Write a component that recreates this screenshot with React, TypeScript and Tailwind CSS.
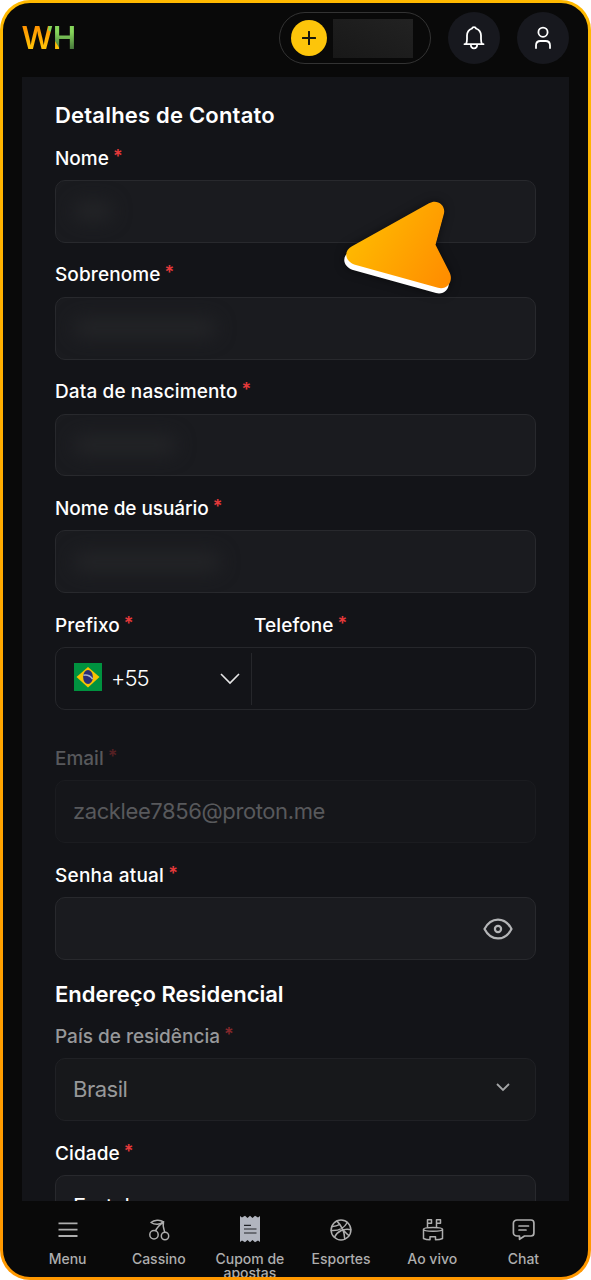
import React from "react";

interface FieldProps {
  label: string;
  labelClass?: string;
  boxClass?: string;
  className?: string;
  children?: React.ReactNode;
}

function Star() {
  return (
    <span className="relative -top-0.5 ml-[4px] text-[18px] leading-none font-semibold tracking-normal text-[#e5393a]">
      *
    </span>
  );
}

function Field({
  label,
  labelClass = "",
  boxClass = "border-[#28292d] bg-[#1a1b1f]",
  className = "",
  children,
}: FieldProps) {
  return (
    <div className={`mb-[19.7px] ${className}`}>
      <label className={`block h-6 pt-px text-[19px] leading-6 font-medium ${labelClass}`}>
        {label}
        <Star />
      </label>
      <div className={`mt-[10.3px] flex h-[62.8px] items-center rounded-[10px] border px-[17px] ${boxClass}`}>
        {children}
      </div>
    </div>
  );
}

// Hidden value inside a private field
function Smudge({ className }: { className: string }) {
  return <div className={`h-5 rounded-full bg-[#232427] blur-[9px] ${className}`} />;
}

function Logo() {
  return (
    <svg width="56" height="30" viewBox="0 0 56 30" className="block">
      <defs>
        <clipPath id="letters">
          <text x="-0.5" y="26" fontFamily="Inter" fontWeight="600" fontSize="31" textLength="31.5" lengthAdjust="spacingAndGlyphs">
            W
          </text>
          <text x="30.8" y="26" fontFamily="Inter" fontWeight="600" fontSize="31" textLength="23.5" lengthAdjust="spacingAndGlyphs">
            H
          </text>
        </clipPath>
        <linearGradient id="orange" x1="0" y1="0" x2="0" y2="1">
          <stop offset="0.1" stopColor="#ff9200" />
          <stop offset="0.8" stopColor="#ffc107" />
        </linearGradient>
        <linearGradient id="green" x1="0" y1="0" x2="0" y2="1">
          <stop offset="0.3" stopColor="#86d65b" />
          <stop offset="0.9" stopColor="#44733a" />
        </linearGradient>
      </defs>
      <g clipPath="url(#letters)">
        <rect width="56" height="30" fill="url(#green)" />
        <path d="M0 0H27L26 7L30 10L33 18L38.5 27V30H0Z" fill="url(#orange)" />
      </g>
    </svg>
  );
}

function BrazilFlag() {
  return (
    <svg width="28" height="28" viewBox="0 0 28 28" className="mb-[3px] block">
      <rect width="28" height="28" fill="#00923f" />
      <path d="M14 4L25.5 14L14 24.5L2.5 14Z" fill="#f8c300" />
      <ellipse cx="14" cy="14" rx="4.9" ry="7" fill="#2b2d77" />
      <path d="M9.4 12.2C13 11.5 16.5 13 18.6 16" stroke="#a9b4cc" strokeWidth="1.6" fill="none" />
    </svg>
  );
}

function Pointer() {
  const shape =
    "M10 48L87 5C95 0 105 7 101.5 17L93.5 46.5L107.5 74C112 83 105 92 96 89.5L13 66.5C3 63 1 53 10 48Z";
  return (
    <svg
      width="120"
      height="110"
      viewBox="0 0 120 110"
      className="pointer-events-none absolute top-[195px] left-[339px] drop-shadow-[0_0_5px_rgba(0,0,0,0.5)]"
    >
      <defs>
        <linearGradient id="pointerFill" x1="0" y1="0.3" x2="1" y2="0.8">
          <stop offset="0" stopColor="#ffbd00" />
          <stop offset="1" stopColor="#ff8e00" />
        </linearGradient>
      </defs>
      <path d={shape} transform="translate(1 8.5)" fill="#fff" />
      <path d={shape} transform="translate(3 3.3)" fill="url(#pointerFill)" />
    </svg>
  );
}

const iconProps = {
  width: 24,
  height: 24,
  viewBox: "0 0 24 24",
  fill: "none",
  stroke: "currentColor",
  strokeWidth: 1.5,
  strokeLinecap: "round" as const,
  strokeLinejoin: "round" as const,
};

const navItems = [
  {
    label: "Menu",
    icon: (
      <svg {...iconProps} strokeLinecap="butt" strokeWidth={1.8}>
        <path d="M2.5 5.3H21.5M2.5 11.7H21.5M2.5 18H21.5" />
      </svg>
    ),
  },
  {
    label: "Cassino",
    icon: (
      <svg {...iconProps}>
        <circle cx="7" cy="16.7" r="4.2" />
        <circle cx="18" cy="18" r="3.7" />
        <path d="M16.5 3.8C13 1.2 7 1.8 4 4.5C8 7.2 13.5 6.8 16.5 3.8Z" />
        <path d="M16.5 3.8C12.5 7 9.5 9.5 8.8 12.5M16.5 3.8C15.4 8 16.8 11 17.8 14.3" />
      </svg>
    ),
  },
  {
    label: "Cupom de apostas",
    icon: (
      <svg width="22" height="28" viewBox="0 0 22 28" className="-mt-[2.5px] -mb-[1.5px]">
        <path
          d="M1 1L3 2.5L6 0.8L8.5 3L11 0.8L13.5 3L16 0.8L19 2.5L21 1V27L19 25.5L16 27.2L13.5 25L11 27.2L8.5 25L6 27.2L3 25.5L1 27Z"
          fill="#b1b5bf"
        />
        <path d="M5 10.3H12M5 14H17.5M5 18H17.5" stroke="#222429" strokeWidth="1.2" />
      </svg>
    ),
  },
  {
    label: "Esportes",
    icon: (
      <svg {...iconProps}>
        <circle cx="12" cy="12" r="9.9" />
        <path d="M8 3.1C12 7 15.5 14 15.7 21M2.2 12.5C9 13 15 10.5 18.3 4.5M5.5 19.3C8 13.5 14.5 10.3 21.7 11.7M2.8 8.4C5 8.5 8 8 10.3 6.7M13.8 11.5C16 14 18.5 16.8 20 17.4" />
      </svg>
    ),
  },
  {
    label: "Ao vivo",
    icon: (
      <svg {...iconProps}>
        <path d="M7.5 9.3V1.8H11.5V5.3H7.5M16.5 9.3V1.8H20.5V5.3H16.5" />
        <path d="M3.5 11.2C3.5 8.8 22.5 8.8 22.5 11.2C22.5 13.9 3.5 13.9 3.5 11.2ZM3.5 11.2V20.5C5.4 21.5 7.7 21.8 10 21.8V18.8H15.5V21.8C18 21.8 20.6 21.5 22.5 20.5V11.2" />
      </svg>
    ),
  },
  {
    label: "Chat",
    icon: (
      <svg {...iconProps} strokeWidth={1.7}>
        <path d="M6 2H20C21.7 2 22.9 3.2 22.9 5V15C22.9 16.8 21.7 18 20 18H13.5L8.5 21.3V18H6C4.2 18 2.4 16.8 2.4 15V5C2.4 3.2 4.2 2 6 2Z" />
        <path d="M8 8H17.5M8 12H15" />
      </svg>
    ),
  },
];

export default function App() {
  return (
    <div className="relative h-[1280px] w-[591px] overflow-hidden bg-white font-['Inter',sans-serif] text-white">
      <div className="h-full rounded-[30px] bg-linear-to-b from-[#ffb900] to-[#ff9800] p-[3px]">
        <div className="flex h-full flex-col overflow-hidden rounded-[27px] bg-[#090909] px-[19px]">
          <header className="flex h-[74px] shrink-0 items-center justify-between pb-[4px]">
            <Logo />
            <div className="flex items-center gap-[17px]">
              <div className="flex h-[52px] w-[152px] items-center rounded-full border border-[#333333] pl-[11px]">
                <div className="flex size-9 items-center justify-center rounded-full bg-[#fdc50a]">
                  <svg width="14" height="14" viewBox="0 0 14 14">
                    <path d="M7 0.8V13.2M0.8 7H13.2" stroke="#18160c" strokeWidth="2" strokeLinecap="round" />
                  </svg>
                </div>
                <div className="ml-[6px] h-[39px] w-20 bg-linear-to-tr from-[#181818] to-[#222222]" />
              </div>
              <div className="flex size-[52px] items-center justify-center rounded-full bg-[#17181e]">
                <svg width="24" height="26" viewBox="0 0 24 26" fill="none" stroke="#fff" strokeWidth="1.8">
                  <path
                    d="M2.5 19.2H21.5M4 19C4.8 17.5 5 16 5 14V10.5C5 6.5 7.5 4.5 10 3.5C10.3 1.7 13.7 1.7 14 3.5C16.5 4.5 19 6.5 19 10.5V14C19 16 19.2 17.5 20 19M8.8 19.5C9 24.6 15 24.6 15.2 19.5"
                    strokeLinecap="round"
                    strokeLinejoin="round"
                  />
                </svg>
              </div>
              <div className="flex size-[52px] items-center justify-center rounded-full bg-[#17181e]">
                <svg width="20" height="24" viewBox="0 0 20 24" fill="none" stroke="#fff" strokeWidth="1.8">
                  <circle cx="10" cy="6.2" r="4.6" />
                  <path d="M3 22.8V19.5C3 16.5 4.5 15 7.5 15H12.5C15.5 15 17 16.5 17 19.5V22.8" />
                </svg>
              </div>
            </div>
          </header>

          <main className="h-[1123.5px] shrink-0 overflow-hidden bg-[#131418] px-[33px] pt-[23.5px]">
            <h2 className="mb-[17.2px] h-7 text-[22px] leading-7 font-semibold tracking-[0.2px]">Detalhes de Contato</h2>
            <Field label="Nome">
              <Smudge className="w-10" />
            </Field>
            <Field label="Sobrenome" labelClass="tracking-[0.1px]">
              <Smudge className="w-36" />
            </Field>
            <Field label="Data de nascimento" labelClass="tracking-[0.12px]">
              <Smudge className="w-26" />
            </Field>
            <Field label="Nome de usuário" labelClass="tracking-[-0.06px]">
              <Smudge className="w-37" />
            </Field>

            <div className="mb-[36.2px]">
              <div className="flex h-6 pt-px text-[19px] leading-6 font-medium tracking-[0.1px]">
                <label className="w-[199px]">
                  Prefixo
                  <Star />
                </label>
                <label>
                  Telefone
                  <Star />
                </label>
              </div>
              <div className="mt-[10.3px] flex h-[62.8px] items-center rounded-[10px] border border-[#26272b] pl-[18px]">
                <BrazilFlag />
                <span className="ml-[9px] text-[22px] font-light tracking-[-0.9px]">+55</span>
                <svg width="20" height="12" viewBox="0 0 20 12" className="mr-[11px] ml-auto">
                  <path d="M1 1L10 10L19 1" fill="none" stroke="#e6e6e6" strokeWidth="1.6" />
                </svg>
                <div className="h-[52px] w-[284px] border-l border-[#26272b]" />
              </div>
            </div>

            <Field
              label="Email"
              className="text-[#58595c]"
              boxClass="border-[#1b1c20] bg-[#15161a]"
              labelClass="[&>span]:text-[#552023]"
            >
              <span className="text-[22px] tracking-[-0.4px]">zacklee7856@proton.me</span>
            </Field>
            <Field label="Senha atual" labelClass="tracking-[0.25px]">
              <svg width="30" height="22" viewBox="0 0 30 22" fill="none" stroke="#b4b5b7" strokeWidth="2.2" className="mr-[5.5px] ml-auto">
                <path d="M1.5 11C8 -1.6 22 -1.6 28.5 11C22 23.6 8 23.6 1.5 11Z" strokeLinejoin="round" />
                <circle cx="15" cy="11" r="3.1" />
              </svg>
            </Field>

            <h2 className="mb-[16.2px] h-7 text-[22px] leading-7 font-semibold">Endereço Residencial</h2>
            <Field
              label="País de residência"
              className="text-[#97989a]"
              boxClass="border-[#202125] bg-[#17181b]"
              labelClass="[&>span]:text-[#85282b]"
            >
              <span className="text-[22px] tracking-[-0.5px]">Brasil</span>
              <svg width="14" height="9" viewBox="0 0 14 9" className="mr-[8px] mb-[5px] ml-auto">
                <path d="M1 1L7 7L13 1" fill="none" stroke="#a4a5a7" strokeWidth="1.8" />
              </svg>
            </Field>
            <Field label="Cidade" labelClass="tracking-[0.1px]">
              <span className="text-[22px] tracking-[-0.4px]">Fortaleza</span>
            </Field>
          </main>

          <nav className="grid shrink-0 grid-cols-6 pt-[17px] text-[#aeaeae]">
            {navItems.map((item) => (
              <div key={item.label} className="flex flex-col items-center">
                {item.icon}
                <span className="mt-[10px] text-center text-[14px] leading-[14px] font-medium">{item.label}</span>
              </div>
            ))}
          </nav>
        </div>
      </div>
      <Pointer />
    </div>
  );
}
